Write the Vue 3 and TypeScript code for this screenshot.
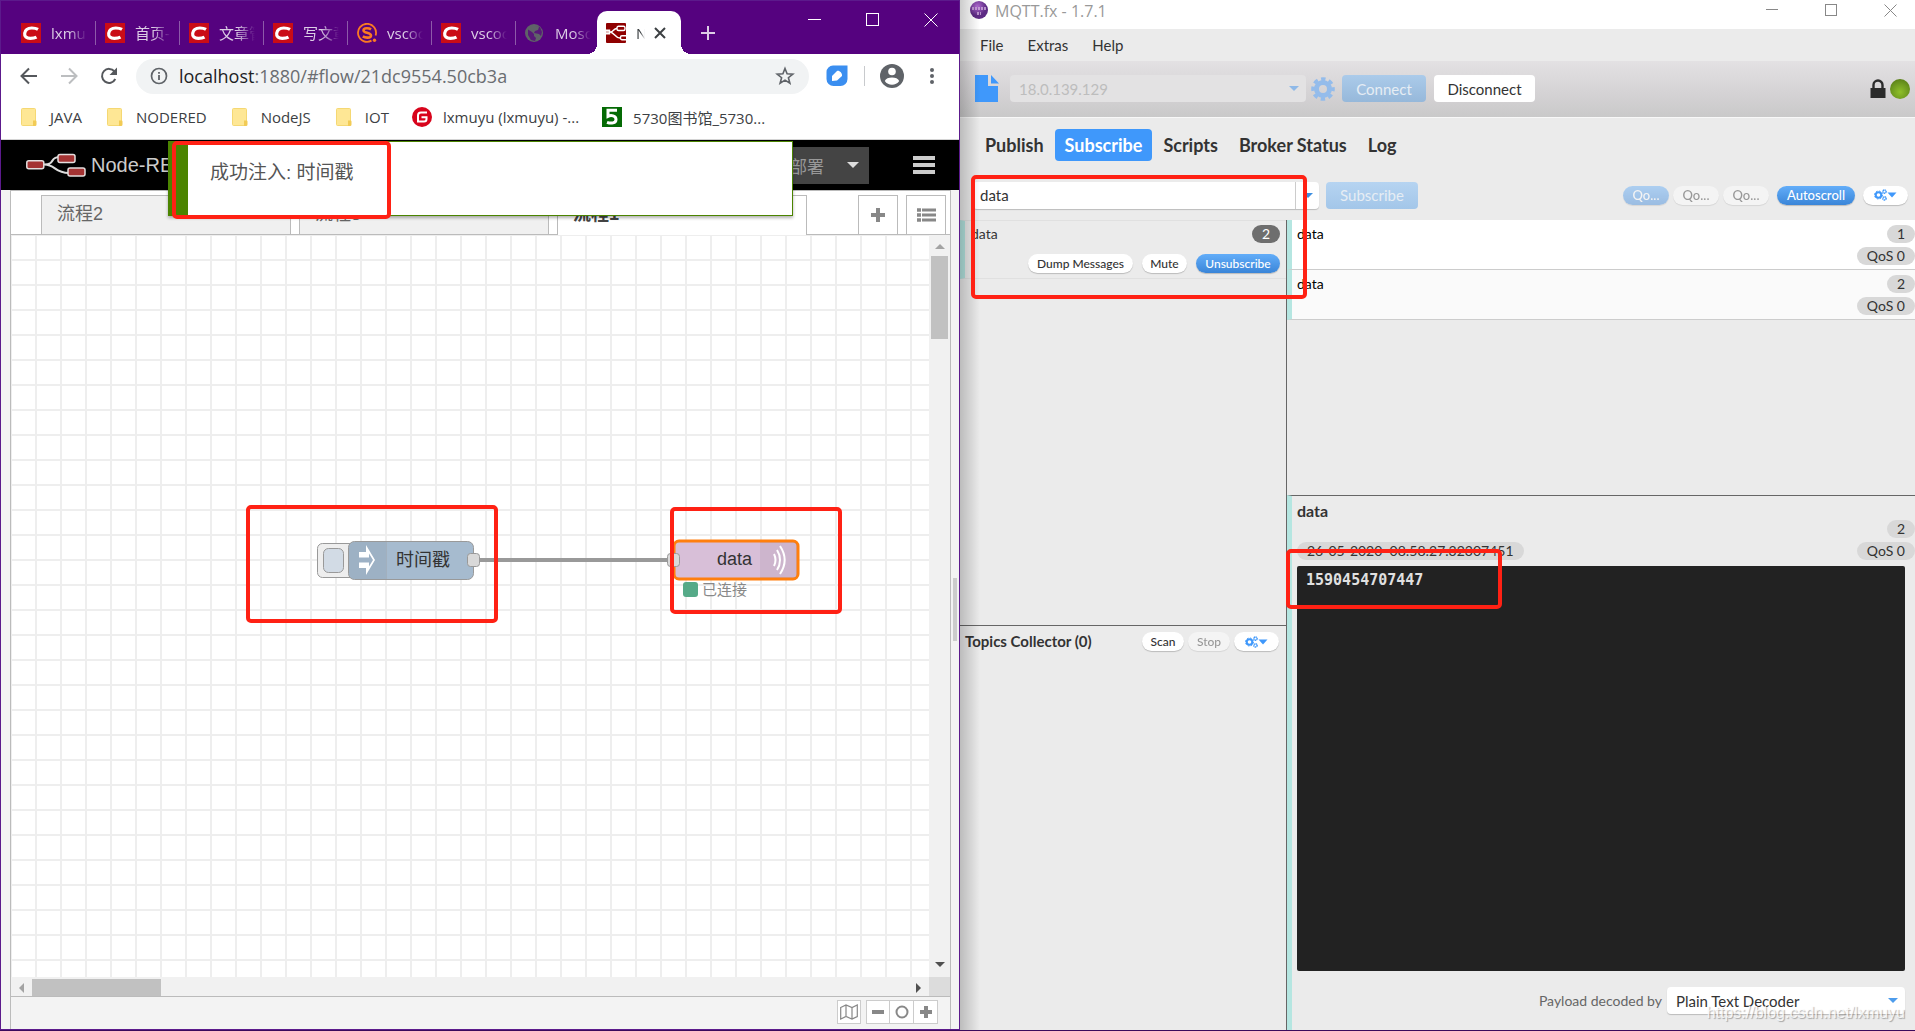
<script setup lang="ts">
interface BrowserTab {
  icon: 'csdn' | 'sogou' | 'globe'
  title: string
}

interface Bookmark {
  icon: 'folder' | 'gitee' | 'five'
  title: string
}

interface Message {
  topic: string
  index: number
  qos: string
}

const tabs: BrowserTab[] = [
  { icon: 'csdn', title: 'lxmu' },
  { icon: 'csdn', title: '首页-' },
  { icon: 'csdn', title: '文章管' },
  { icon: 'csdn', title: '写文章' },
  { icon: 'sogou', title: 'vscoc' },
  { icon: 'csdn', title: 'vscoc' },
  { icon: 'globe', title: 'Mosq' },
]

const bookmarks: Bookmark[] = [
  { icon: 'folder', title: 'JAVA' },
  { icon: 'folder', title: 'NODERED' },
  { icon: 'folder', title: 'NodeJS' },
  { icon: 'folder', title: 'IOT' },
  { icon: 'gitee', title: 'lxmuyu (lxmuyu) -...' },
  { icon: 'five', title: '5730图书馆_5730...' },
]

const messages: Message[] = [
  { topic: 'data', index: 1, qos: 'QoS 0' },
  { topic: 'data', index: 2, qos: 'QoS 0' },
]

const menus = ['File', 'Extras', 'Help']
const sections = ['Publish', 'Subscribe', 'Scripts', 'Broker Status', 'Log']
</script>

<template>
  <main class="desktop">
    <section class="browser">
      <header class="tabstrip">
        <div v-for="(tab, i) in tabs" :key="i" class="tab">
          <svg v-if="tab.icon === 'csdn'" class="favicon" viewBox="0 0 20 20">
            <rect width="20" height="20" fill="#ca0c16" />
            <path d="M17 6.4C15 5.200 12.800 5 10.800 5 6.800 5 4.200 7 3.700 10.200 3.200 13.600 5.500 15.300 9.300 15.300c2.500 0 4.600-.3 6.200-1.200" fill="none" stroke="#fff" stroke-width="3.200" />
          </svg>
          <svg v-else-if="tab.icon === 'sogou'" class="favicon" viewBox="0 0 20 20">
            <path d="M14.500 17.600A9 9 0 1 1 18.600 12.500" fill="none" stroke="#fb7a22" stroke-width="1.800" />
            <path d="M14 6.300C12 5 6.500 4.600 6.500 7.400c0 2.800 7.500 2 7.500 5 0 3-6 2.600-8.200 1" fill="none" stroke="#fb7a22" stroke-width="2.600" />
            <circle cx="17.500" cy="17.300" r="1.700" fill="#fb7a22" />
          </svg>
          <svg v-else class="favicon" viewBox="0 0 20 20">
            <circle cx="9" cy="10" r="9" fill="#5f6368" />
            <path d="M3 6.500 7 9l2 2v2l2 2-1 3-4-1-3-5zM10 3l4 1-1 3-3 1-1 2 5 1 2 2 1-4-2-5z" fill="#55027f" opacity=".75" />
          </svg>
          <span class="tab-title">{{ tab.title }}</span>
        </div>
        <div class="tab active">
          <svg class="favicon" viewBox="0 0 20 20">
            <rect width="20" height="20" rx="1" fill="#8f0000" />
            <g fill="none" stroke="#fff" stroke-width="1.400">
              <path d="M0 9h4c4 0 3-3.500 7-3.500M4 9c4 0 5 6 10 6" />
              <rect x="11" y="3.300" width="8" height="4.200" rx="1.500" />
              <path d="M20 12.800h-4a1.500 1.500 0 0 0-1.500 1.500v1a1.500 1.500 0 0 0 1.500 1.500h4M0 7.200h3.500v3.600H0" />
            </g>
          </svg>
          <span class="tab-title active-title">N</span>
          <button class="plain tab-close" aria-label="Close tab">
            <svg width="12" height="12" viewBox="0 0 12 12"><path d="M1 1l10 10M11 1 1 11" stroke="#3c4043" stroke-width="2" /></svg>
          </button>
        </div>
        <button class="plain new-tab" aria-label="New tab">
          <svg width="16" height="16" viewBox="0 0 16 16"><path d="M8 1v14M1 8h14" stroke="#ddcde6" stroke-width="2" /></svg>
        </button>
        <div class="window-buttons">
          <button class="plain" aria-label="Minimize"><svg width="14" height="14"><path d="M0 6.500h13" stroke="#fff" /></svg></button>
          <button class="plain" aria-label="Maximize"><svg width="14" height="14"><rect x=".5" y=".5" width="12" height="12" fill="none" stroke="#fff" /></svg></button>
          <button class="plain" aria-label="Close"><svg width="14" height="14"><path d="M.5.5l13 13M13.500.5l-13 13" stroke="#fff" /></svg></button>
        </div>
      </header>

      <nav class="toolbar">
        <button class="plain nav-button" aria-label="Back">
          <svg width="20" height="20" viewBox="0 0 20 20"><path d="M18 10H3M10 2.500 2.500 10l7.500 7.500" fill="none" stroke="#55585c" stroke-width="2" /></svg>
        </button>
        <button class="plain nav-button" aria-label="Forward">
          <svg width="20" height="20" viewBox="0 0 20 20"><path d="M2 10h15M10 2.500l7.500 7.500-7.500 7.500" fill="none" stroke="#bcbec0" stroke-width="2" /></svg>
        </button>
        <button class="plain nav-button" aria-label="Reload">
          <svg width="20" height="20" viewBox="0 0 20 20"><path d="M16.300 13A7 7 0 1 1 15.500 5.500L17 7" fill="none" stroke="#55585c" stroke-width="2" /><path d="M18 1.500V9h-7.500z" fill="#55585c" /></svg>
        </button>
        <div class="address">
          <svg width="18" height="18" viewBox="0 0 18 18"><circle cx="9" cy="9" r="7.500" fill="none" stroke="#5f6368" stroke-width="1.700" /><path d="M9 8v5M9 5v1.800" stroke="#5f6368" stroke-width="1.800" /></svg>
          <span class="url"><span class="host">localhost</span>:1880/#flow/21dc9554.50cb3a</span>
          <svg width="20" height="20" viewBox="0 0 20 20"><path d="M10 2.500l2.100 5.300 5.700.3-4.400 3.600 1.500 5.500L10 14.100l-4.900 3.100 1.500-5.500L2.200 8.100l5.700-.3z" fill="none" stroke="#5f6368" stroke-width="1.600" /></svg>
        </div>
        <svg class="extension" width="22" height="22" viewBox="0 0 22 22">
          <path d="M7 0.500h14.500V14a7 7 0 0 1-7 7H7.500a7 7 0 0 1-7-7V7A6.500 6.500 0 0 1 7 .5z" fill="#3a8ef0" />
          <path d="M6 16v-5l5-5c2-1 5.500 2 5 5l-5 4.500z" fill="#fff" />
        </svg>
        <span class="divider"></span>
        <svg class="account" width="24" height="24" viewBox="0 0 24 24">
          <circle cx="12" cy="12" r="12" fill="#5f6368" /><circle cx="12" cy="7.500" r="3.800" fill="#fff" />
          <path d="M4.800 17c1.600-4.600 12.800-4.600 14.400 0-3.200 5-11.200 5-14.400 0z" fill="#fff" />
        </svg>
        <button class="plain" aria-label="Menu">
          <svg width="6" height="18" viewBox="0 0 6 18"><g fill="#5f6368"><circle cx="3" cy="3" r="2" /><circle cx="3" cy="9" r="2" /><circle cx="3" cy="15" r="2" /></g></svg>
        </button>
      </nav>

      <nav class="bookmarks">
        <a v-for="mark in bookmarks" :key="mark.title" href="#" class="bookmark">
          <svg v-if="mark.icon === 'folder'" width="16" height="18" viewBox="0 0 16 18">
            <rect x=".5" y=".5" width="14" height="17" rx="1" fill="#fee795" stroke="#f5d873" /><path d="M12 12.500h2.500a1 1 0 0 1 1 1v3a1.500 1.500 0 0 1-1.500 1.500h-2z" fill="#f2cb55" />
          </svg>
          <svg v-else-if="mark.icon === 'gitee'" class="site-icon" width="20" height="20" viewBox="0 0 20 20">
            <circle cx="10" cy="10" r="10" fill="#d8041c" />
            <path d="M15 5.500H9A3 3 0 0 0 6 8.500v6h6a2.500 2.500 0 0 0 2.500-2.500v-1.700H9.500" fill="none" stroke="#fff" stroke-width="2" />
          </svg>
          <svg v-else class="site-icon" width="20" height="20" viewBox="0 0 20 20">
            <rect width="20" height="20" fill="#046a04" />
            <path d="M15 3.300H6v6c3-1.400 8-.7 8 3.200 0 3.800-5 4.300-9 2.800" fill="none" stroke="#fff" stroke-width="3" />
          </svg>
          <span>{{ mark.title }}</span>
        </a>
      </nav>

      <header class="red-header">
        <svg width="60" height="26" viewBox="0 0 60 26">
          <path d="M18 12.500c12 0 5-7.500 16-7.500M18 12.500c12 0 10 8.500 25 8.500" fill="none" stroke="#ddd" stroke-width="2" />
          <g fill="#a43333" stroke="#e4dede" stroke-width="1.500">
            <rect x=".8" y="8.800" width="17" height="8" rx="2" /><rect x="32" y="2.500" width="17" height="8" rx="2" /><rect x="42" y="16" width="17" height="8" rx="2" />
          </g>
        </svg>
        <h1>Node-RED</h1>
        <button class="deploy">
          <span>部署</span>
          <svg width="12" height="6"><path d="M0 0h12L6 6z" fill="#ddd" /></svg>
        </button>
        <button class="plain hamburger" aria-label="Main menu">
          <svg width="22" height="18"><path d="M0 2h22M0 9h22M0 16h22" stroke="#ccc" stroke-width="4" /></svg>
        </button>
      </header>

      <div class="notification">成功注入: 时间戳</div>

      <div class="editor">
        <div class="workspace">
          <div class="flow-tabs">
            <a href="#" class="flow-tab">流程2</a>
            <a href="#" class="flow-tab">流程3</a>
            <a href="#" class="flow-tab selected">流程1</a>
            <button class="tab-tool add" aria-label="Add flow"><svg width="14" height="14"><path d="M7 0v14M0 7h14" stroke="#888" stroke-width="4" /></svg></button>
            <button class="tab-tool" aria-label="List flows">
              <svg width="19" height="14"><path d="M5 2h14M5 7h14M5 12h14" stroke="#888" stroke-width="3" /><path d="M0 2h4M0 7h4M0 12h4" stroke="#888" stroke-width="3.500" /></svg>
            </button>
          </div>
          <div class="canvas-area">
            <svg class="canvas">
              <path d="M469 325H657" stroke="#999" stroke-width="4" />
              <g stroke="#999" stroke-width="1">
                <rect x="306.500" y="308.500" width="44" height="34" rx="5" fill="#eee" />
                <rect x="312.500" y="313.500" width="20" height="24" rx="5" fill="#d2dbe5" />
                <rect x="337.500" y="306.500" width="125" height="38" rx="6" fill="#a6bbcf" />
                <path d="M375 307v37h-31a6 6 0 0 1-6-6v-25a6 6 0 0 1 6-6z" fill="#000" fill-opacity=".05" stroke="none" />
                <path d="M375.500 307v37" stroke-opacity=".3" />
              </g>
              <path d="M348 317h7v-7l9 15-9 15v-7h-7z" fill="#fff" />
              <path d="M348 322.500h10v-4l4 6.500-4 6.500v-4h-10z" fill="#9db1c5" />
              <text x="385" y="331" class="node-label">时间戳</text>
              <rect x="456.500" y="318.500" width="12" height="13" rx="3" fill="#d9d9d9" stroke="#999" />
              <rect x="663" y="306" width="124" height="38" rx="5" fill="#d8bfd8" stroke="#ff7f0e" stroke-width="3" />
              <path d="M749 307h33a4 4 0 0 1 4 4v28a4 4 0 0 1-4 4h-33z" fill="#000" fill-opacity=".05" />
              <g fill="none" stroke="#fff" stroke-width="2">
                <path d="M763 319c2 4 2 8 0 12M766 315c4 6 4 14 0 20M769 311c6 9 6 19 0 28" />
              </g>
              <text x="706" y="330" class="node-label">data</text>
              <rect x="656.500" y="318.500" width="12" height="13" rx="3" fill="#d9d9d9" stroke="#999" />
              <rect x="672" y="347" width="15" height="15" rx="3" fill="#5a8" />
              <text x="691" y="360" class="status-label">已连接</text>
            </svg>
            <div class="scroll-v">
              <svg width="10" height="5"><path d="M0 5h10L5 0z" fill="#a3a3a3" /></svg>
              <span class="thumb-v"></span>
              <svg class="scroll-end" width="10" height="5"><path d="M0 0h10L5 5z" fill="#505050" /></svg>
            </div>
            <div class="scroll-h">
              <svg width="5" height="10"><path d="M5 0v10L0 5z" fill="#a3a3a3" /></svg>
              <span class="thumb-h"></span>
              <svg class="scroll-right" width="5" height="10"><path d="M0 0v10l5-5z" fill="#505050" /></svg>
            </div>
            <div class="scroll-corner"></div>
          </div>
          <footer class="flow-footer">
            <button class="foot-button" aria-label="Toggle navigator">
              <svg width="18" height="16"><path d="M.7 3.500 6 1l6 2.500L17.300 1v11.500L12 15l-6-2.500L.7 15zM6 1v11.500M12 3.500V15" fill="none" stroke="#888" stroke-width="1.200" /></svg>
            </button>
            <div class="zoom-group">
              <button class="foot-button" aria-label="Zoom out"><svg width="14" height="14"><path d="M1 7h12" stroke="#888" stroke-width="4" /></svg></button>
              <button class="foot-button" aria-label="Reset zoom"><svg width="14" height="14"><circle cx="7" cy="7" r="5.500" fill="none" stroke="#888" stroke-width="2" /></svg></button>
              <button class="foot-button" aria-label="Zoom in"><svg width="14" height="14"><path d="M7 1v12M1 7h12" stroke="#888" stroke-width="4" /></svg></button>
            </div>
          </footer>
        </div>
        <div class="splitter"><span></span></div>
      </div>

      <div class="mark mark-note"></div>
      <div class="mark mark-inject"></div>
      <div class="mark mark-output"></div>
    </section>

    <section class="mqtt">
      <header class="titlebar">
        <svg width="18" height="18" viewBox="0 0 18 18">
          <defs><radialGradient id="ball" cx=".4" cy=".3"><stop offset="0" stop-color="#b06ad0" /><stop offset="1" stop-color="#5d2b84" /></radialGradient></defs>
          <circle cx="9" cy="9" r="9" fill="url(#ball)" /><path d="M2 7.500h14M7 12.500h4" stroke="#d8b8e4" stroke-width="3" stroke-dasharray="2 1" opacity=".7" />
        </svg>
        <span class="app-title">MQTT.fx - 1.7.1</span>
        <button class="plain" aria-label="Minimize"><svg width="13" height="13"><path d="M0 5.500h12" stroke="#888" /></svg></button>
        <button class="plain" aria-label="Maximize"><svg width="13" height="13"><rect x=".5" y=".5" width="11" height="11" fill="none" stroke="#888" /></svg></button>
        <button class="plain" aria-label="Close"><svg width="13" height="13"><path d="M.5.5l12 12M12.500.5l-12 12" stroke="#888" /></svg></button>
      </header>

      <nav class="menubar">
        <a v-for="item in menus" :key="item" href="#">{{ item }}</a>
      </nav>

      <div class="connection">
        <svg width="24" height="28" viewBox="0 0 24 28"><path d="M0 0h13v11h10v16H0zM16 0l8 8.500h-8z" fill="#3f98fb" /></svg>
        <div class="combo profile">
          <select aria-label="Connection profile" disabled><option>18.0.139.129</option></select>
          <svg class="caret" width="10" height="5"><path d="M0 0h10L5 5z" fill="#8fb9e8" /></svg>
        </div>
        <svg class="cog" width="24" height="24" viewBox="0 0 24 24">
          <circle cx="12" cy="12" r="6.500" fill="none" stroke="#94bceb" stroke-width="5" />
          <circle cx="12" cy="12" r="10" fill="none" stroke="#94bceb" stroke-width="3.600" stroke-dasharray="4.400 3.454" stroke-dashoffset="2.200" />
        </svg>
        <button class="fx-button disabled connect">Connect</button>
        <button class="fx-button light">Disconnect</button>
        <svg class="lock" width="16" height="20" viewBox="0 0 16 20"><path d="M.5 9h15v10H.5z" fill="#2b2b2b" /><path d="M3.500 10V6a4.500 4.500 0 0 1 9 0v4" fill="none" stroke="#2b2b2b" stroke-width="2.400" /></svg>
        <span class="led"></span>
      </div>

      <nav class="sections">
        <a v-for="name in sections" :key="name" href="#" :class="{ current: name === 'Subscribe' }">{{ name }}</a>
      </nav>

      <div class="subscribe-bar">
        <div class="combo topic">
          <input type="text" value="data" aria-label="Topic" />
          <span class="topic-arrow"><svg width="10" height="5"><path d="M0 0h10L5 5z" fill="#3d8ee0" /></svg></span>
        </div>
        <button class="fx-button disabled pale subscribe">Subscribe</button>
        <div class="qos-pills">
          <button class="pill blue faded">Qo...</button>
          <button class="pill faded">Qo...</button>
          <button class="pill faded">Qo...</button>
        </div>
        <button class="pill blue autoscroll">Autoscroll</button>
        <button class="pill cogs" aria-label="Options">
          <svg width="23" height="12" viewBox="0 0 23 12"><g fill="none" stroke="#3f98fb"><circle cx="4.500" cy="6" r="2.800" stroke-width="2" /><circle cx="4.500" cy="6" r="4" stroke-width="1" stroke-dasharray="1.600 1.540" /><circle cx="10.500" cy="2.600" r="1.600" stroke-width="1.500" stroke-dasharray="1.300 .4" /><circle cx="10.500" cy="9.400" r="1.600" stroke-width="1.500" stroke-dasharray="1.300 .4" /></g><path d="M13.500 3.500h9l-4.500 5z" fill="#3f98fb" /></svg>
        </button>
      </div>

      <div class="panes">
        <div class="left-pane">
          <div class="subscriptions">
            <article class="subscription">
              <div class="sub-row"><span>data</span><span class="badge dark">2</span></div>
              <div class="sub-actions">
                <button class="pill dump">Dump Messages</button>
                <button class="pill mute">Mute</button>
                <button class="pill blue unsubscribe">Unsubscribe</button>
              </div>
            </article>
          </div>
          <div class="collector">
            <h2>Topics Collector (0)</h2>
            <button class="pill scan">Scan</button>
            <button class="pill faded stop">Stop</button>
            <button class="pill cogs" aria-label="Collector options">
              <svg width="23" height="12" viewBox="0 0 23 12"><g fill="none" stroke="#3f98fb"><circle cx="4.500" cy="6" r="2.800" stroke-width="2" /><circle cx="4.500" cy="6" r="4" stroke-width="1" stroke-dasharray="1.600 1.540" /><circle cx="10.500" cy="2.600" r="1.600" stroke-width="1.500" stroke-dasharray="1.300 .4" /><circle cx="10.500" cy="9.400" r="1.600" stroke-width="1.500" stroke-dasharray="1.300 .4" /></g><path d="M13.500 3.500h9l-4.500 5z" fill="#3f98fb" /></svg>
            </button>
          </div>
        </div>

        <div class="right-pane">
          <ul class="messages">
            <li v-for="m in messages" :key="m.index">
              <span>{{ m.topic }}</span>
              <span class="badges"><span class="badge">{{ m.index }}</span><span class="badge">{{ m.qos }}</span></span>
            </li>
          </ul>
          <div class="detail">
            <strong>data</strong>
            <div class="detail-index"><span class="badge">2</span></div>
            <div class="detail-meta"><span class="badge">26-05-2020&nbsp; 08:58:27.32307451</span><span class="badge">QoS 0</span></div>
            <pre class="payload">1590454707447</pre>
            <div class="decoder">
              <label for="decoder">Payload decoded by</label>
              <div class="combo">
                <select id="decoder"><option>Plain Text Decoder</option></select>
                <svg class="caret" width="10" height="5"><path d="M0 0h10L5 5z" fill="#4d9cec" /></svg>
              </div>
            </div>
            <span class="watermark">https://blog.csdn.net/lxmuyu</span>
          </div>
          <div class="mark mark-payload"></div>
        </div>
      </div>
      <div class="mark mark-topic"></div>
    </section>
  </main>
</template>

<style>
body {
  margin: 0;
}
</style>

<style scoped>
* {
  box-sizing: border-box;
}
button,
input,
select {
  font: inherit;
  color: inherit;
  margin: 0;
}
svg {
  display: block;
  flex: none;
}
a {
  color: inherit;
  text-decoration: none;
}
.plain {
  background: none;
  border: 0;
  padding: 0;
}
.desktop {
  display: flex;
  min-height: 100vh;
  border-bottom: 1px solid #3a0a5c;
}

/* Browser window */
.browser {
  position: relative;
  flex: 959 1 0;
  min-width: 0;
  display: flex;
  flex-direction: column;
  border: 1px solid #5c1a8c;
  background: #fff;
  font-family: "Open Sans", "Noto Sans CJK SC", sans-serif;
  font-size: 15px;
}
.tabstrip {
  display: flex;
  height: 53px;
  padding-left: 11px;
  background: #55027f;
}
.tab {
  position: relative;
  display: flex;
  align-items: center;
  width: 84px;
  height: 43px;
  margin-top: 10px;
  padding-left: 9px;
  color: #dccde5;
}
.tab::after {
  content: "";
  position: absolute;
  right: 0;
  top: 10px;
  width: 1px;
  height: 24px;
  background: #8d5aa9;
}
.tab:nth-child(7)::after {
  display: none;
}
.tab.active {
  background: #fff;
  border-radius: 10px 10px 0 0;
  color: #3c4043;
  margin-left: -3px;
}
/* The active tab flares out into the toolbar on both sides */
.tab.active::before,
.tab.active::after {
  content: "";
  position: absolute;
  top: auto;
  bottom: 0;
  width: 10px;
  height: 10px;
}
.tab.active::before {
  left: -10px;
  background: radial-gradient(circle at 0 0, #55027f 10px, #fff 10px);
}
.tab.active::after {
  right: -10px;
  background: radial-gradient(circle at 100% 0, #55027f 10px, #fff 10px);
}
.favicon {
  width: 20px;
  height: 20px;
}
.tab-title {
  width: 36px;
  margin-left: 10px;
  overflow: hidden;
  white-space: nowrap;
  mask-image: linear-gradient(90deg, #000 50%, transparent);
}
.active-title {
  width: 9px;
}
.tab-close {
  margin-left: 9px;
}
.new-tab {
  width: 18px;
  margin: 10px 0 0 19px;
}
.window-buttons {
  display: flex;
  gap: 44px;
  margin: 12px 21px 0 auto;
  height: 14px;
}
.toolbar {
  display: flex;
  align-items: center;
  height: 44px;
  padding: 0 24px 0 18px;
}
.nav-button {
  width: 20px;
  margin-right: 20px;
}
.address {
  display: flex;
  align-items: center;
  flex: 1;
  height: 35px;
  margin-left: -3px;
  padding: 0 14px;
  border-radius: 18px;
  background: #f1f3f4;
}
.url {
  flex: 1;
  margin-left: 11px;
  font-size: 18px;
  line-height: 24px;
  color: #6a6d71;
}
.host {
  color: #202124;
}
.extension {
  margin-left: 17px;
}
.divider {
  width: 1px;
  height: 20px;
  margin: 0 15px 0 16px;
  background: #c8cacd;
}
.account {
  margin-right: 25px;
}
.bookmarks {
  display: flex;
  gap: 25px;
  height: 42px;
  padding: 0 20px 3px;
  border-bottom: 1px solid #d4d4d4;
  color: #3c4043;
}
.bookmark {
  display: flex;
  align-items: center;
  gap: 13px;
  white-space: nowrap;
}
.site-icon {
  margin: 0 -2px;
}

/* Node-RED */
.red-header {
  display: flex;
  align-items: center;
  height: 50px;
  padding: 0 24px 0 25px;
  background: #000;
  color: #ccc;
  font-family: "Liberation Sans", "Noto Sans CJK SC", sans-serif;
}
.red-header h1 {
  flex: 1;
  margin: 0 0 0 5px;
  font-size: 20px;
  font-weight: 400;
}
.deploy {
  display: flex;
  align-items: center;
  justify-content: flex-end;
  gap: 23px;
  width: 120px;
  height: 37px;
  padding: 0 10px 0 0;
  border: 0;
  background: #444;
  color: #999;
  font-size: 17px;
}
.hamburger {
  margin-left: 44px;
}
.notification {
  position: absolute;
  left: 167px;
  top: 140px;
  z-index: 2;
  width: 625px;
  height: 75px;
  padding: 17px 22px;
  border: 1px solid #4b8400;
  border-left-width: 20px;
  background: #fff;
  box-shadow: 0 2px 3px rgba(0, 0, 0, 0.3);
  color: #555;
  font: 19px/28px "Liberation Sans", "Noto Sans CJK SC", sans-serif;
}
.editor {
  display: flex;
  flex: 1;
  padding-left: 9px;
  background: #f3f3f3;
  font-family: "Liberation Sans", "Noto Sans CJK SC", sans-serif;
}
.workspace {
  display: flex;
  flex-direction: column;
  flex: 1;
  min-width: 0;
  border: 1px solid #bbb;
  border-bottom: 0;
}
.flow-tabs {
  display: flex;
  align-items: flex-end;
  gap: 8px;
  height: 44px;
  padding: 0 4px 0 30px;
  border-bottom: 1px solid #bbb;
  background: #fff;
  color: #666;
  font-size: 18px;
}
.flow-tab {
  width: 250px;
  height: 39px;
  padding-left: 15px;
  border: 1px solid #bbb;
  border-bottom: 0;
  background: #f0f0f0;
  line-height: 37px;
}
.flow-tab.selected {
  height: 40px;
  margin-bottom: -1px;
  background: #fff;
  color: #444;
  font-weight: 700;
}
.tab-tool {
  display: flex;
  align-items: center;
  justify-content: center;
  width: 40px;
  height: 39px;
  border: 1px solid #bbb;
  border-bottom: 0;
  background: #fff;
  padding: 0;
}
.tab-tool.add {
  margin-left: auto;
}
.canvas-area {
  display: grid;
  grid-template: minmax(0, 1fr) 19px / minmax(0, 1fr) 21px;
  flex: 1;
  background: #f1f1f1;
}
.canvas {
  width: 100%;
  height: 100%;
  background-color: #fff;
  background-image: linear-gradient(90deg, #eee 2px, transparent 2px), linear-gradient(#eee 2px, transparent 2px);
  background-size: 25px 25px;
  background-position: -1px -1px;
}
.node-label {
  font-size: 18px;
  fill: #333;
}
.status-label {
  font-size: 15px;
  fill: #888;
}
.scroll-v {
  display: flex;
  flex-direction: column;
  align-items: center;
  padding: 9px 0 10px;
}
.thumb-v {
  width: 17px;
  height: 83px;
  margin-top: 7px;
  background: #c1c1c1;
}
.scroll-end {
  margin-top: auto;
}
.scroll-h {
  display: flex;
  align-items: center;
  padding: 2px 8px 0;
}
.thumb-h {
  width: 129px;
  height: 17px;
  margin-left: 8px;
  background: #c1c1c1;
}
.scroll-right {
  margin-left: auto;
}
.scroll-corner {
  background: #dcdcdc;
}
.flow-footer {
  display: flex;
  justify-content: flex-end;
  gap: 5px;
  height: 33px;
  padding: 3px 12px 0;
  border-top: 1px solid #bbb;
  background: #f3f3f3;
}
.foot-button {
  display: flex;
  align-items: center;
  justify-content: center;
  width: 24px;
  height: 24px;
  padding: 0;
  border: 1px solid #ccc;
  background: #fff;
}
.zoom-group {
  display: flex;
}
.zoom-group .foot-button + .foot-button {
  border-left: 0;
}
.splitter {
  display: flex;
  align-items: center;
  justify-content: center;
  width: 8px;
}
.splitter span {
  width: 4px;
  height: 63px;
  background: #ccc;
}

/* Hand-drawn highlight frames */
.mark {
  position: absolute;
  z-index: 3;
  border: 4px solid #ff2114;
  border-radius: 5px;
  pointer-events: none;
}
.mark-note {
  left: 171px;
  top: 140px;
  width: 219px;
  height: 78px;
}
.mark-inject {
  left: 245px;
  top: 504px;
  width: 252px;
  height: 118px;
}
.mark-output {
  left: 669px;
  top: 506px;
  width: 172px;
  height: 107px;
}
.mark-topic {
  left: 11px;
  top: 175px;
  width: 336px;
  height: 124px;
}
.mark-payload {
  left: -1px;
  top: 329px;
  width: 216px;
  height: 60px;
}

/* MQTT.fx window */
.mqtt {
  position: relative;
  flex: 956 1 0;
  min-width: 0;
  display: flex;
  flex-direction: column;
  background: #ebebeb;
  color: #333;
  font-family: Lato, sans-serif;
  font-size: 15px;
}
.mqtt::before {
  content: "";
  position: absolute;
  inset: 0 auto 0 0;
  z-index: 1;
  width: 20px;
  background: linear-gradient(90deg, rgba(0, 0, 0, 0.2), transparent);
  pointer-events: none;
}
.titlebar {
  display: flex;
  gap: 46px;
  height: 29px;
  padding: 4px 18px 0 10px;
  background: #fff;
}
.titlebar > svg {
  margin-top: -3px;
}
.titlebar .plain {
  height: 13px;
}
.app-title {
  flex: 1;
  margin: -4px 0 0 -39px;
  font: 16px/22px "Open Sans", sans-serif;
  color: #999;
}
.menubar {
  display: flex;
  align-items: center;
  gap: 24px;
  height: 32px;
  padding-left: 20px;
}
.connection {
  display: flex;
  align-items: center;
  height: 57px;
  padding: 0 5px 1px 15px;
  border-bottom: 1px solid #f8f8f8;
  background: linear-gradient(#e3e1e3, #d4d2d4 60%, #c9c9c9);
}
.combo {
  position: relative;
  display: flex;
  height: 27px;
  border-radius: 4px;
  background: #fff;
  box-shadow: 0 1px 1px rgba(0, 0, 0, 0.2);
}
.combo select {
  width: 100%;
  padding: 0 9px;
  border: 0;
  background: none;
  appearance: none;
  opacity: 1;
}
.caret {
  position: absolute;
  right: 7px;
  top: 11px;
}
.profile {
  width: 296px;
  margin-left: 11px;
  background: #e3e2e3;
  box-shadow: none;
  color: #bdbdbd;
}
.cog {
  margin: 0 7px 0 5px;
}
.fx-button {
  height: 27px;
  padding: 0;
  border: 0;
  border-radius: 4px;
}
.disabled {
  background: linear-gradient(#abcbea, #96b8da);
  color: #e6edf4;
}
.pale {
  background: linear-gradient(#b6d4f1, #a3c6e9);
}
.connect {
  width: 84px;
}
.light {
  width: 101px;
  margin-left: 8px;
  background: #fff;
}
.lock {
  margin-left: auto;
}
.led {
  width: 20px;
  height: 20px;
  margin-left: 4px;
  border-radius: 50%;
  background: radial-gradient(circle at 50% 65%, #8fc02a, #6f9a20 50%, #4d7012);
}
.sections {
  display: flex;
  gap: 1px;
  height: 43px;
  padding: 11px 0 0 15px;
  font-size: 18px;
  font-weight: 700;
  line-height: 32px;
}
.sections a {
  height: 32px;
  padding: 0 10px;
  border-radius: 4px;
}
.sections .current {
  background: #3f98fb;
  color: #fff;
}
.subscribe-bar {
  display: flex;
  align-items: center;
  height: 59px;
  padding: 9px 7px 0 13px;
}
.topic {
  width: 346px;
}
.topic input {
  flex: 1;
  min-width: 0;
  padding: 0 7px;
  border: 0;
  border-right: 1px solid #ccc;
  background: none;
}
.topic-arrow {
  display: flex;
  align-items: center;
  justify-content: center;
  width: 23px;
}
.subscribe {
  width: 92px;
  margin-left: 7px;
}
.pill {
  display: flex;
  align-items: center;
  justify-content: center;
  height: 19px;
  padding: 0;
  border: 0;
  border-radius: 10px;
  background: #fff;
  box-shadow: 0 1px 1px rgba(0, 0, 0, 0.2);
  font-size: 13px;
  font-weight: 500;
  line-height: 18px;
}
.pill.blue {
  background: linear-gradient(#62adf9, #3a85d8);
  color: #fff;
}
.pill.faded {
  opacity: 0.45;
}
.qos-pills {
  display: flex;
  gap: 4px;
  margin-left: auto;
}
.qos-pills .pill {
  width: 46px;
}
.autoscroll {
  width: 78px;
  margin: 0 8px;
}
.pill.cogs {
  width: 45px;
}
.left-pane .pill {
  font-size: 12px;
}
.dump {
  width: 105px;
}
.mute {
  width: 45px;
}
.unsubscribe {
  width: 84px;
}
.scan,
.stop {
  width: 42px;
}
.panes {
  display: flex;
  flex: 1;
}
.left-pane {
  display: flex;
  flex-direction: column;
  width: 326px;
}
.subscriptions {
  height: 405px;
}
.subscription {
  height: 59px;
  padding: 4px 6px 0 6px;
  border: 1px solid #e0e0e0;
  border-width: 1px 0;
  border-left: 5px solid #b5e6e1;
}
.sub-row {
  display: flex;
  justify-content: space-between;
  font-size: 14px;
  line-height: 18px;
}
.sub-actions {
  display: flex;
  justify-content: flex-end;
  gap: 9px;
  margin-top: 11px;
}
.badge {
  display: inline-block;
  height: 18px;
  padding: 0 10px;
  border-radius: 9px;
  background: #d8d8d8;
  color: #333;
  font-size: 14px;
  line-height: 18px;
}
.badge.dark {
  background: #6e6e6e;
  color: #fff;
}
.collector {
  display: flex;
  align-items: center;
  gap: 4px;
  height: 32px;
  padding: 0 7px 0 5px;
  border-top: 1px solid #666;
}
.collector h2 {
  flex: 1;
  margin: 0;
  padding-bottom: 2px;
  font-size: 15px;
  font-weight: 700;
}
.right-pane {
  position: relative;
  display: flex;
  flex-direction: column;
  flex: 1;
  min-width: 0;
  border-left: 1px solid #666;
}
.messages {
  height: 275px;
  margin: 0;
  padding: 0;
  list-style: none;
}
.messages li {
  display: flex;
  justify-content: space-between;
  height: 50px;
  padding: 5px 0 0 5px;
  border-bottom: 1px solid #ccc;
  border-left: 5px solid #b5e6e1;
  background: #fff;
  color: #000;
  font-size: 14px;
  line-height: 18px;
}
.messages li:nth-child(2) {
  background: #fafafa;
}
.badges {
  display: flex;
  flex-direction: column;
  align-items: flex-end;
  gap: 4px;
}
.detail {
  position: relative;
  display: flex;
  flex-direction: column;
  flex: 1;
  padding: 6px 0 16px 5px;
  border-top: 1px solid #666;
  border-left: 5px solid #b5e6e1;
}
.detail strong {
  font-size: 16px;
  line-height: 18px;
}
.detail-index {
  display: flex;
  justify-content: flex-end;
  height: 22px;
}
.detail-meta {
  display: flex;
  justify-content: space-between;
}
.payload {
  flex: 1;
  margin: 6px 10px 16px 0;
  padding: 5px 9px;
  border-radius: 2px;
  background: #222;
  color: #e0e0e0;
  font: 700 15px/18px "DejaVu Sans Mono", monospace;
}
.decoder {
  display: flex;
  align-items: center;
  justify-content: flex-end;
  gap: 5px;
  padding-right: 10px;
  color: #666;
  font-size: 14px;
}
.decoder .combo {
  width: 238px;
  color: #333;
  font-size: 15px;
}
.watermark {
  position: absolute;
  right: 10px;
  bottom: 8px;
  color: rgba(255, 255, 255, 0.8);
  font: 16px/18px "Liberation Sans", sans-serif;
  text-shadow: 1px 1px 1px rgba(0, 0, 0, 0.3);
}
</style>
